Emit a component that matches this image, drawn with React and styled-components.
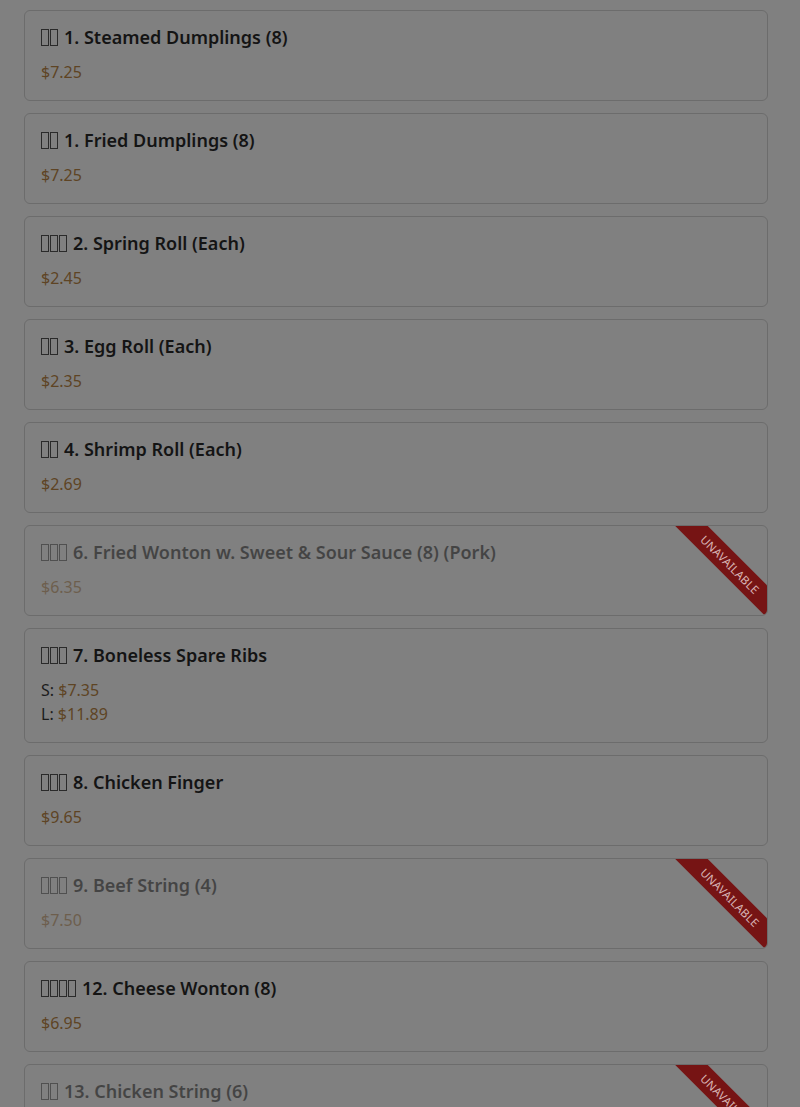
import React from "react";
import styled, { createGlobalStyle } from "styled-components";

const GlobalStyle = createGlobalStyle`
  html, body {
    margin: 0;
    padding: 0;
    background: #808080;
  }
  body {
    font-family: "Noto Sans", "Noto Sans CJK SC", sans-serif;
  }
`;

const items = [
  { zh: 2, name: "1. Steamed Dumplings (8)", prices: [["", "$7.25"]] },
  { zh: 2, name: "1. Fried Dumplings (8)", prices: [["", "$7.25"]] },
  { zh: 3, name: "2. Spring Roll (Each)", prices: [["", "$2.45"]] },
  { zh: 2, name: "3. Egg Roll (Each)", prices: [["", "$2.35"]] },
  { zh: 2, name: "4. Shrimp Roll (Each)", prices: [["", "$2.69"]] },
  { zh: 3, name: "6. Fried Wonton w. Sweet & Sour Sauce (8) (Pork)", prices: [["", "$6.35"]], off: true },
  { zh: 3, name: "7. Boneless Spare Ribs", prices: [["S: ", "$7.35"], ["L: ", "$11.89"]] },
  { zh: 3, name: "8. Chicken Finger", prices: [["", "$9.65"]] },
  { zh: 3, name: "9. Beef String (4)", prices: [["", "$7.50"]], off: true },
  { zh: 4, name: "12. Cheese Wonton (8)", prices: [["", "$6.95"]] },
  { zh: 2, name: "13. Chicken String (6)", prices: [["", "$7.95"]], off: true },
];

const List = styled.div`
  display: flex;
  flex-direction: column;
  gap: 12px;
  padding: 10px 32px 24px 24px;
`;

const Card = styled.div`
  position: relative;
  overflow: hidden;
  border: 1px solid #6c6c6c;
  border-radius: 6px;
  padding: 15px 16px 16px;
`;

const Body = styled.div`
  opacity: ${(p) => (p.$off ? 0.55 : 1)};
`;

const Title = styled.div`
  display: flex;
  align-items: center;
  gap: 6px;
  font-size: 18px;
  line-height: 22px;
  font-weight: 600;
  color: #141414;
  margin-bottom: 12px;
`;

const Tofu = styled.span`
  display: inline-flex;
  gap: 1px;
  span {
    width: 6px;
    height: 15px;
    border: 1px solid #2a2a2a;
    box-sizing: content-box;
  }
`;

const PriceLine = styled.div`
  font-size: 16px;
  line-height: 24px;
  color: #1c1c1c;
`;

const Price = styled.span`
  color: #5e4424;
`;

const Ribbon = styled.div`
  position: absolute;
  top: 27px;
  right: -45px;
  width: 164px;
  height: 23px;
  background: #761414;
  color: #d8b4b4;
  font-size: 11.5px;
  line-height: 23px;
  letter-spacing: 0.2px;
  text-align: center;
  text-transform: uppercase;
  transform: rotate(45deg);
`;

function Boxes({ n }) {
  return (
    <Tofu>
      {Array.from({ length: n }).map((_, i) => (
        <span key={i} />
      ))}
    </Tofu>
  );
}

export default function App() {
  return (
    <>
      <GlobalStyle />
      <List>
        {items.map((it, i) => (
          <Card key={i}>
            <Body $off={it.off}>
              <Title>
                <Boxes n={it.zh} />
                <span>{it.name}</span>
              </Title>
              {it.prices.map(([label, value], j) => (
                <PriceLine key={j}>
                  {label}
                  <Price>{value}</Price>
                </PriceLine>
              ))}
            </Body>
            {it.off && <Ribbon>Unavailable</Ribbon>}
          </Card>
        ))}
      </List>
    </>
  );
}
